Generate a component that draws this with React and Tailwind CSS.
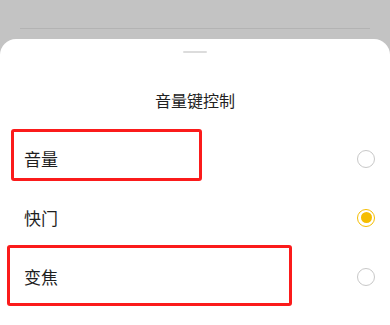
import { useState } from 'react'

const options = ['音量', '快门', '变焦']

export default function App() {
  const [selected, setSelected] = useState('快门')

  return (
    <div
      className="relative h-[325px] w-[390px] overflow-hidden bg-[#c3c3c3]"
      style={{ fontFamily: '"Noto Sans CJK SC", "Noto Sans", sans-serif' }}
    >
      {/* dimmed page behind the sheet */}
      <div className="h-[39px] pt-[28px]">
        <div className="mx-5 h-px bg-[#b3b3b3]" />
      </div>

      {/* bottom sheet */}
      <div className="h-[286px] rounded-t-[16px] bg-white">
        <div className="flex justify-center pt-[12px]">
          <div className="h-[2px] w-6 rounded-full bg-[#dcdcdc]" />
        </div>
        <div className="flex h-[76px] items-center justify-center pt-[18px] text-[16px] text-[#222]">
          音量键控制
        </div>
        {options.map((opt) => (
          <button
            key={opt}
            onClick={() => setSelected(opt)}
            className="flex h-[59px] w-full items-center justify-between pl-6 pr-[15px] text-left"
          >
            <span className="text-[17px] text-[#1f1f1f]">{opt}</span>
            {selected === opt ? (
              <span className="flex h-[18px] w-[18px] items-center justify-center rounded-full border-[1.5px] border-[#f5bd00]">
                <span className="h-[11px] w-[11px] rounded-full bg-[#f5bd00]" />
              </span>
            ) : (
              <span className="h-[18px] w-[18px] rounded-full border-[1.5px] border-[#c8c8c8]" />
            )}
          </button>
        ))}
      </div>

      {/* annotation boxes */}
      <div className="pointer-events-none absolute left-[11px] top-[129px] h-[52px] w-[191px] rounded-[3px] border-[3px] border-[#fb1b1b]" />
      <div className="pointer-events-none absolute left-[7px] top-[245px] h-[61px] w-[285px] rounded-[3px] border-[3px] border-[#fb1b1b]" />
    </div>
  )
}
